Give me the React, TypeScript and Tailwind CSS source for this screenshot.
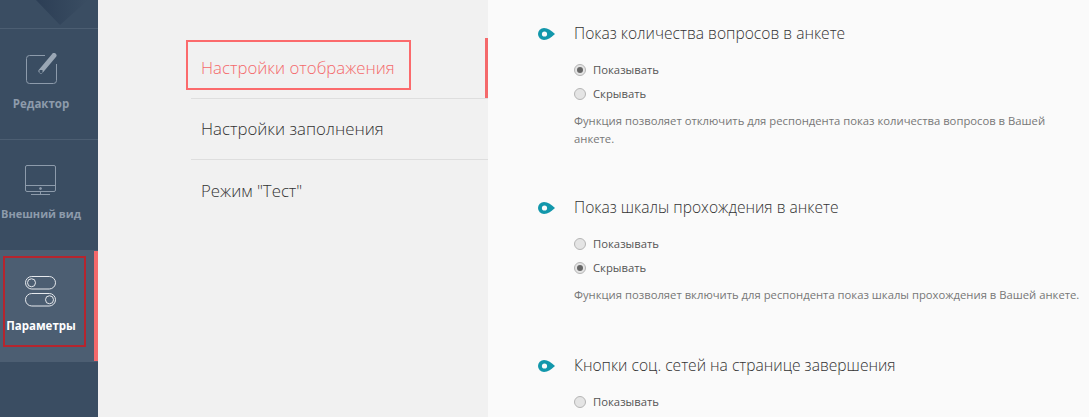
import React from "react";

const font = { fontFamily: '"Open Sans", "Noto Sans", sans-serif' };

const EditIcon = () => (
  <svg width="32" height="32" viewBox="0 0 32 32" fill="none">
    <path
      d="M20 2.5H4.5a3 3 0 0 0-3 3v22a3 3 0 0 0 3 3h24a3 3 0 0 0 3-3V11"
      stroke="#8d9bab"
      strokeWidth="1"
    />
    <path d="M29 2.5 L16 18" stroke="#9aa7b5" strokeWidth="5" strokeLinecap="round" />
    <rect x="14.5" y="17" width="3" height="3" fill="#3b4e63" />
  </svg>
);

const MonitorIcon = () => (
  <svg width="32" height="32" viewBox="0 0 32 32" fill="none" stroke="#8d9bab" strokeWidth="1">
    <rect x="0.5" y="1.5" width="30" height="26" rx="1.5" />
    <path d="M0.5 21.5H30.5M6 30.5H25M15.5 27.5V30.5" />
    <circle cx="15.5" cy="24.5" r="1" fill="#8d9bab" />
  </svg>
);

const ToggleIcon = () => (
  <svg width="32" height="32" viewBox="0 0 32 32" fill="none" stroke="#e6e9ed" strokeWidth="1">
    <rect x="0.5" y="1.5" width="30" height="12.5" rx="6.25" />
    <circle cx="6.5" cy="7.75" r="4" />
    <rect x="0.5" y="18.5" width="30" height="12.5" rx="6.25" />
    <circle cx="24.5" cy="24.75" r="4" />
  </svg>
);

const Marker = () => (
  <svg width="17" height="12" viewBox="0 0 17 12" className="shrink-0">
    <path d="M6 0C10 0 13.5 2.8 17 6C13.5 9.2 10 12 6 12A6 6 0 0 1 6 0Z" fill="#1297ab" />
    <circle cx="6.5" cy="6" r="2.6" fill="#fafafa" />
  </svg>
);

const Radio = ({ label, checked }: { label: string; checked?: boolean }) => (
  <div className="flex h-6 items-center">
    <span className="flex h-3 w-3 items-center justify-center rounded-full border border-[#b5b5b5] bg-[#e4e4e4]">
      {checked && <span className="h-[6px] w-[6px] rounded-full bg-[#666666]" />}
    </span>
    <span className="ml-[7px] text-[11.3px] text-[#555555]">{label}</span>
  </div>
);

const SideItem = ({
  label,
  icon,
  height,
  labelSize = "text-[11.5px]",
  active,
}: {
  label: string;
  icon: React.ReactNode;
  height: string;
  labelSize?: string;
  active?: boolean;
}) => (
  <div
    className={`relative flex flex-col items-center pr-[16px] ${height} ${
      active ? "bg-[#4c5e72] pt-[25px]" : "pt-[24px]"
    }`}
  >
    {icon}
    <span
      className={`mt-[10px] whitespace-nowrap font-bold ${labelSize} ${
        active ? "text-white" : "text-[#8d9bab]"
      }`}
    >
      {label}
    </span>
    {active && <span className="absolute bottom-[1px] right-0 top-[1px] w-1 bg-[#f4696b]" />}
  </div>
);

const Section = ({
  title,
  checked,
  note,
  className,
}: {
  title: string;
  checked: number;
  note?: React.ReactNode;
  className?: string;
}) => (
  <div className={className}>
    <div className="flex h-6 items-center gap-[19px]">
      <Marker />
      <span className="text-[15.6px] font-light text-[#333333]">{title}</span>
    </div>
    <div className="ml-[36px] mt-[12px]">
      <Radio label="Показывать" checked={checked === 0} />
      {note && <Radio label="Скрывать" checked={checked === 1} />}
      {note && <p className="mt-[6px] w-[490px] text-[11.27px] leading-[18px] text-[#777777]">{note}</p>}
    </div>
  </div>
);

export default function App() {
  return (
    <div className="relative flex h-[417px] w-[1089px] overflow-hidden bg-[#fafafa]" style={font}>
      <aside className="w-[98px] shrink-0 bg-[#3a4d62]">
        <div className="h-[29px] border-b border-[#4c5e72]">
          <svg width="98" height="28" viewBox="0 0 98 28">
            <defs>
              <linearGradient id="fold" x1="0" y1="0" x2="1" y2="0">
                <stop offset="0" stopColor="#2c3e55" />
                <stop offset="1" stopColor="#3a4d62" />
              </linearGradient>
            </defs>
            <polygon points="36,0 88,0 60,25" fill="url(#fold)" />
          </svg>
        </div>
        <div className="border-b border-[#4c5e72]">
          <SideItem label="Редактор" icon={<EditIcon />} height="h-[110px]" />
        </div>
        <SideItem label="Внешний вид" icon={<MonitorIcon />} height="h-[110px]" labelSize="text-[11px]" />
        <SideItem label="Параметры" icon={<ToggleIcon />} height="h-[112px]" active />
      </aside>

      <div className="relative w-[390px] shrink-0 bg-[#f1f1f1] pl-[93px] pt-[38px]">
        <div className="relative flex h-[61px] items-center border-b border-[#dedede] pl-[10px] text-[16.8px] font-light text-[#f4696b]">
          Настройки отображения
          <span className="absolute bottom-0 right-0 top-0 w-[3px] bg-[#f4696b]" />
        </div>
        <div className="flex h-[61px] items-center border-b border-[#dedede] pl-[10px] text-[16.8px] font-light text-[#333333]">
          Настройки заполнения
        </div>
        <div className="flex h-[61px] items-center pl-[10px] text-[16.8px] font-light text-[#333333]">
          Режим "Тест"
        </div>
        {/* annotation box */}
        <div className="absolute left-[88px] top-[40px] h-[50px] w-[225px] border-2 border-[#fb6a6c]" />
      </div>

      <main className="flex-1 pl-[50px] pt-[22px]">
        <div className="flex flex-col gap-[48px]">
          <Section
            title="Показ количества вопросов в анкете"
            checked={0}
            note="Функция позволяет отключить для респондента показ количества вопросов в Вашей анкете."
          />
          <Section
            title="Показ шкалы прохождения в анкете"
            checked={1}
            className="mb-[2px]"
            note={<span className="whitespace-nowrap">Функция позволяет включить для респондента показ шкалы прохождения в Вашей анкете.</span>}
          />
          <Section title="Кнопки соц. сетей на странице завершения" checked={-1} />
        </div>
      </main>

      {/* annotation box */}
      <div className="absolute left-[3px] top-[256px] h-[91px] w-[83px] border-2 border-[#b5252e]" />
    </div>
  );
}
